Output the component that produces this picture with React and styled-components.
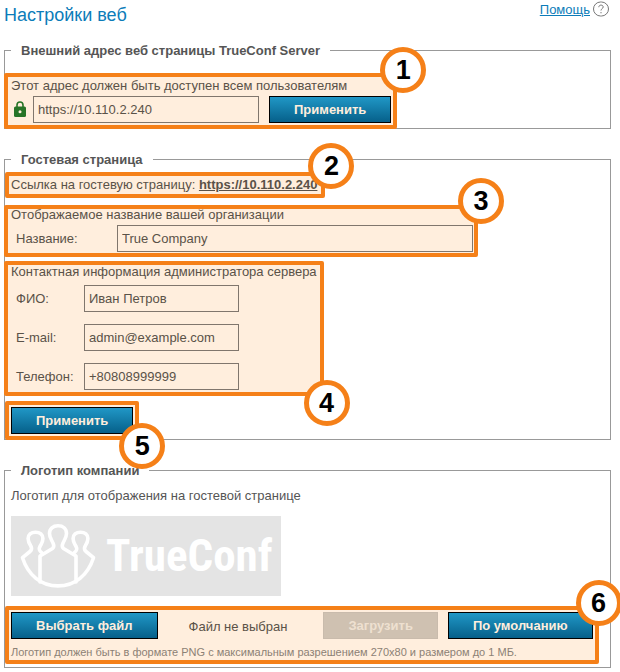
import React from "react";
import styled, { createGlobalStyle, css } from "styled-components";

const ORANGE = "#f58018";

const GlobalStyle = createGlobalStyle`
  *, *::before, *::after { box-sizing: border-box; }
  body {
    margin: 0;
    background: #fff;
    color: #555;
    font: 13px/15px "Liberation Sans", Arial, sans-serif;
    overflow-x: hidden;
  }
  input, button { font-family: inherit; font-size: inherit; }
`;

const Page = styled.main`
  padding: 0 9px 4px 4px;
`;

const Header = styled.header`
  display: flex;
  justify-content: space-between;
  align-items: flex-start;
  height: 43px;
`;

const Title = styled.h1`
  margin: 4px 0 0;
  font-size: 18px;
  line-height: 22px;
  font-weight: 400;
  color: #0c7cb9;
`;

const Help = styled.div`
  display: flex;
  align-items: center;
  gap: 3px;
  padding: 1px 2px 0 0;
`;

const HelpLink = styled.a`
  color: #0c7cb9;
  text-decoration: underline;
`;

const HelpIcon = styled.svg`
  display: block;
  width: 16px;
  height: 16px;
`;

const Section = styled.fieldset`
  min-width: 0;
  margin: 0 0 ${(p) => p.$after || 0}px;
  padding: ${(p) => p.$top}px 0 ${(p) => p.$bottom || 0}px;
  border: 1px solid #999;
`;

const Legend = styled.legend`
  margin-left: 6px;
  padding: 0 10px;
  font-weight: 700;
  line-height: 15px;
`;

const Callout = styled.div`
  position: relative;
  width: fit-content;
  margin: 0 0 ${(p) => p.$after}px ${(p) => (p.$flush ? -1 : 0)}px;
  padding: ${(p) => p.$pad || "2px"};
  padding-left: ${(p) => (p.$flush ? 3 : 2)}px;
  border: 4px solid ${ORANGE};
  border-radius: 2px;
  background: #ffeedd;
  color: #5a5248;
`;

const Badge = styled.span`
  position: absolute;
  z-index: 1;
  right: ${(p) => p.$right}px;
  ${(p) => (p.$bottom !== undefined ? css`bottom: ${p.$bottom}px;` : css`top: ${p.$top}px;`)}
  display: grid;
  place-items: center;
  width: 46px;
  height: 46px;
  border: 5px solid ${ORANGE};
  border-radius: 50%;
  background: #fff;
  color: #000;
  font-size: 27px;
  line-height: 36px;
  font-weight: 700;
`;

const Line = styled.p`
  display: block;
  margin: 0;
  line-height: ${(p) => p.$height || 15}px;
`;

const Row = styled.div`
  display: flex;
  align-items: center;
`;

const AddressRow = styled(Row)`
  margin-top: 2px;
  padding-left: 3px;
`;

const Lock = styled.svg`
  width: 12px;
  height: 16px;
  margin: 0 7px 2px 0;
`;

const TextInput = styled.input`
  width: ${(p) => p.$width}px;
  height: 27px;
  padding: 0 4px;
  border: 1px solid #80766d;
  border-radius: 0;
  background: transparent;
  color: #5a5248;
`;

const Fields = styled.div`
  display: grid;
  grid-template-columns: ${(p) => p.$label}px auto;
  justify-content: start;
  align-items: center;
  row-gap: 12px;
  padding-left: 5px;
  margin-top: ${(p) => p.$top}px;
`;

const Button = styled.button`
  height: 27px;
  padding: 0 24px;
  border: 1px solid #000;
  border-radius: 0;
  background: linear-gradient(#2097c6, #06608a);
  color: #ffeedd;
  font-weight: 700;
  white-space: nowrap;
  margin-left: ${(p) => p.$gap || 0}px;

  &:disabled {
    border-color: #c9bbac;
    background: #cfc1b1;
    color: #eee0d0;
  }
`;

const GuestLink = styled.a`
  color: inherit;
  font-weight: 700;
  text-decoration: underline;
`;

const Logo = styled.div`
  display: flex;
  align-items: center;
  width: 270px;
  height: 80px;
  margin: 13px 0 10px 6px;
  padding-left: 9px;
  background: #e4e4e4;
`;

const LogoMark = styled.svg`
  width: 76px;
  height: 68px;
  flex: none;
`;

const Wordmark = styled.span`
  margin-left: 10px;
  color: #fff;
  font: 700 45px/60px "Roboto Condensed", "Liberation Sans Narrow", "Liberation Sans", sans-serif;
`;

const Intro = styled(Line)`
  padding-left: 6px;
`;

const FileStatus = styled.span`
  margin: 2px 36px 0 31px;
`;

const Hint = styled.p`
  margin: 7px 0 0;
  font-size: 11px;
  line-height: 12px;
  color: #8c8175;
`;

export default function App() {
  return (
    <>
      <GlobalStyle />
      <Page>
        <Header>
          <Title>Настройки веб</Title>
          <Help>
            <HelpLink href="#help">Помощь</HelpLink>
            <HelpIcon viewBox="0 0 16 16" fill="none" stroke="#777" aria-hidden="true">
              <rect x="0.5" y="1" width="15" height="14" rx="7" />
              <path d="M5.8 6.2c.1-1.4 1-2.1 2.2-2.1s2.2.7 2.2 1.9c0 1.6-2.2 1.7-2.2 3.5M8 11v1.3" />
            </HelpIcon>
          </Help>
        </Header>

        <Section $top={15} $after={23}>
          <Legend>Внешний адрес веб страницы TrueConf Server</Legend>
          <Callout $flush $after={-1} $pad="0 2px 2px">
            <Line as="label" htmlFor="address" $height={17}>
              Этот адрес должен быть доступен всем пользователям
            </Line>
            <AddressRow>
              <Lock viewBox="0 0 12 16" aria-hidden="true">
                <path d="M3 7V4a3 3 0 0 1 6 0v3" fill="none" stroke="#277427" strokeWidth="1.6" />
                <rect y="5.5" width="12" height="10.5" rx="1.5" fill="#277427" />
                <circle cx="6" cy="10.7" r="1.5" fill="#ffeedd" />
              </Lock>
              <TextInput id="address" $width={226} defaultValue="https://10.110.2.240" />
              <Button type="button" $gap={10}>Применить</Button>
            </AddressRow>
            <Badge $top={-30} $right={-33}>1</Badge>
          </Callout>
        </Section>

        <Section $top={5} $after={23}>
          <Legend>Гостевая страница</Legend>
          <Callout $after={7} $pad="1px 4px 2px">
            <Line>
              Ссылка на гостевую страницу:{" "}
              <GuestLink href="https://10.110.2.240">https://10.110.2.240</GuestLink>
            </Line>
            <Badge $top={-33} $right={-33}>2</Badge>
          </Callout>
          <Callout $flush $after={4} $pad="0 1px 1px">
            <Line $height={12}>Отображаемое название вашей организации</Line>
            <Fields $label={101} $top={4}>
              <label htmlFor="org">Название:</label>
              <TextInput id="org" $width={356} defaultValue="True Company" />
            </Fields>
            <Badge $top={-31} $right={-30}>3</Badge>
          </Callout>
          <Callout $flush $after={5} $pad="0 3px 2px">
            <Line $height={13}>Контактная информация администратора сервера</Line>
            <Fields $label={68} $top={7}>
              <label htmlFor="name">ФИО:</label>
              <TextInput id="name" $width={155} defaultValue="Иван Петров" />
              <label htmlFor="email">E-mail:</label>
              <TextInput id="email" $width={155} defaultValue="admin@example.com" />
              <label htmlFor="phone">Телефон:</label>
              <TextInput id="phone" $width={155} defaultValue="+80808999999" />
            </Fields>
            <Badge $bottom={-34} $right={-30}>4</Badge>
          </Callout>
          <Callout $after={-1}>
            <Row>
              <Button type="button">Применить</Button>
            </Row>
            <Badge $bottom={-33} $right={-30}>5</Badge>
          </Callout>
        </Section>

        <Section $top={10} $bottom={3}>
          <Legend>Логотип компании</Legend>
          <Intro>Логотип для отображения на гостевой странице</Intro>
          <Logo>
            <LogoMark viewBox="0 0 76 68" fill="none" stroke="#fff" strokeWidth="3.6" strokeLinejoin="round" strokeLinecap="round" aria-hidden="true">
              <path d="M20 60V34L32.500 26.500C34.500 25 34 23.500 33.200 21.500C31.500 17.500 29.500 15.500 29.500 11.500C29.500 6.500 33 3.800 38 3.800S46.500 6.500 46.500 11.500C46.500 15.500 44.500 17.500 42.800 21.500C42 23.500 41.500 25 43.500 26.500L56 34V60" />
              <path d="M22 31C18.500 28.500 18.800 26.500 20.200 24C21.500 21.500 22.900 20 22.900 16.500C22.900 12.500 20 10.200 15.500 10.200S8.100 12.500 8.100 16.500C8.100 20 9.500 22 10.800 24C12.200 26.500 12 28 10 29.500L2.500 35.700C8 53 21 63.900 38 63.900S68 53 73.500 35.700L66 29.500C64 28 63.800 26.500 65.200 24C66.500 22 67.900 20 67.900 16.500C67.900 12.500 65 10.200 60.500 10.200S53.100 12.500 53.100 16.500C53.100 20 54.500 21.500 55.800 24C57.200 26.500 57.500 28.500 54 31" />
            </LogoMark>
            <Wordmark>TrueConf</Wordmark>
          </Logo>
          <Callout $after={0}>
            <Row>
              <Button type="button">Выбрать файл</Button>
              <FileStatus>Файл не выбран</FileStatus>
              <Button type="button" disabled>Загрузить</Button>
              <Button type="button" $gap={10}>По умолчанию</Button>
            </Row>
            <Hint>Логотип должен быть в формате PNG с максимальным разрешением 270x80 и размером до 1 МБ.</Hint>
            <Badge $top={-30} $right={-27}>6</Badge>
          </Callout>
        </Section>
      </Page>
    </>
  );
}
